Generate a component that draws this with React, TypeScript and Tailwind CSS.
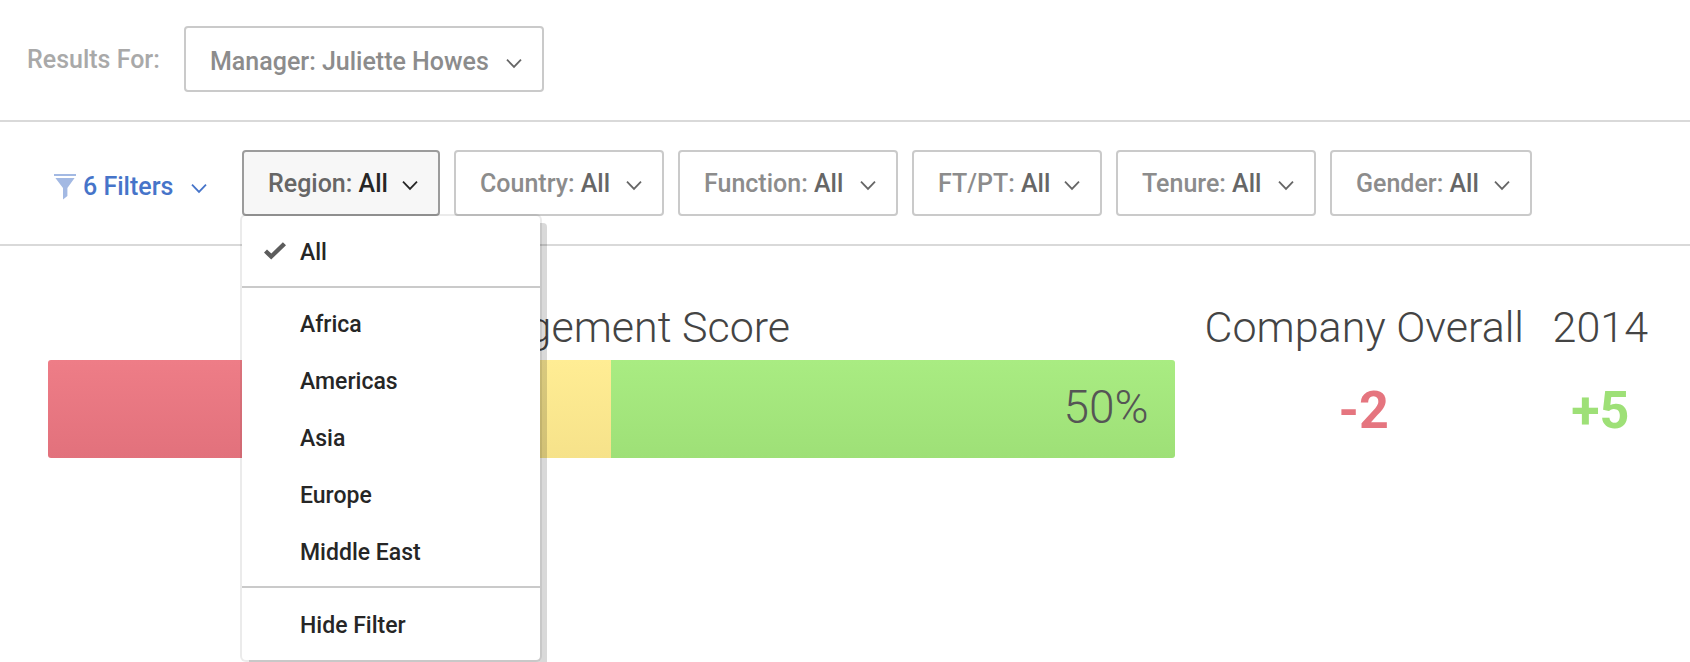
import React, { FC } from 'react'


interface Filter {
    name: string;
    width: string;
}

const filters: Filter[] = [
    { name: 'Region', width: 'w-[198px]' },
    { name: 'Country', width: 'w-[210px]' },
    { name: 'Function', width: 'w-[220px]' },
    { name: 'FT/PT', width: 'w-[190px]' },
    { name: 'Tenure', width: 'w-[200px]' },
    { name: 'Gender', width: 'w-[202px]' },
];

const regions = ['Africa', 'Americas', 'Asia', 'Europe', 'Middle East'];

const Chevron: FC = () => (
    <svg className="w-4 h-4 mt-1 shrink-0" viewBox="0 0 16 16" fill="none" stroke="currentColor" strokeWidth="1.8">
        <path d="M1 3.7 8 10.9l7-7.2" />
    </svg>
);

const Funnel: FC = () => (
    <svg className="w-[22px] h-[26px] shrink-0 text-[#a3b9e3]" viewBox="0 0 22 26" fill="currentColor">
        <path d="M0 0h22v2H0zM1.4 4h19.2L13.4 14v8L9 25.6V14z" />
    </svg>
);

const Check: FC = () => (
    <svg className="w-[22px] h-[18px] mb-1 shrink-0 text-[#5c5c5c]" viewBox="0 0 22 18" fill="currentColor">
        <path d="M0 10.6 3 7.6l4.3 4L18.9.2 22 3.2 7.2 17.6z" />
    </svg>
);

const ResultsBar: FC = () => (
    <div className="flex items-center border-b-2 border-[#d9d9d9] pl-[27px] pt-[26px] pb-7">
        <span className="w-[157px] pt-0.5 text-[#a9a9a9]">Results For:</span>
        <button className="flex items-center justify-between w-[360px] h-[66px] pt-1.5 pl-6 pr-5 border-2 border-[#cacaca] rounded-[4px] text-[#8c8c8c]">
            Manager: Juliette Howes
            <span className="text-[#666]"><Chevron /></span>
        </button>
    </div>
);

const RegionMenu: FC = () => (
    <div
        role="menu"
        className="absolute z-10 left-0 top-full w-[298px] rounded-[4px] bg-white text-[23px] text-[#262626] shadow-[0_0_0_2px_rgba(0,0,0,0.08),7px_7px_0_0_rgba(0,0,0,0.15)]"
    >
        <div className="pt-2 pb-[5px] border-b-2 border-[#cacaca]">
            <button role="menuitem" className="flex items-center gap-[14px] w-full h-[57px] pl-[22px]">
                <Check />
                All
            </button>
        </div>
        <div className="pt-2 pb-[5px] border-b-2 border-[#cacaca]">
            {regions.map((region) => (
                <button key={region} role="menuitem" className="block w-full h-[57px] pl-[58px] text-left">{region}</button>
            ))}
        </div>
        <div className="pt-[9px] pb-1.5">
            <button role="menuitem" className="block w-full h-[57px] pl-[58px] text-left">Hide Filter</button>
        </div>
    </div>
);

const FilterBar: FC = () => (
    <div className="flex items-center border-b-2 border-[#d9d9d9] pl-[54px] py-7">
        <button className="flex items-center w-[188px] pt-2 text-[#4674c9]">
            <Funnel />
            <span className="pl-[7px] pr-[18px]">6 Filters</span>
            <Chevron />
        </button>
        <div className="flex gap-[14px]">
            {filters.map(({ name, width }) => {
                const open = name === 'Region';
                return (
                    <div key={name} className={`relative ${width}`}>
                        <button
                            aria-expanded={open}
                            className={`flex items-center justify-between w-full h-[66px] pt-0.5 pl-6 pr-5 border-2 rounded-[4px] ${open ? 'border-[#9c9c9c] bg-[#f7f7f7] text-[#666]' : 'border-[#cacaca] text-[#8c8c8c]'}`}
                        >
                            <span>{name}: <span className={open ? 'text-[#262626]' : 'text-[#666]'}>All</span></span>
                            <span className={open ? 'text-[#262626]' : 'text-[#666]'}><Chevron /></span>
                        </button>
                        {open && <RegionMenu />}
                    </div>
                );
            })}
        </div>
    </div>
);

const Scores: FC = () => (
    <div className="flex gap-[30px] pl-12 pr-[42px] pt-[54px] text-[#444]">
        <div className="flex-1">
            <h2 className="h-[60px] leading-[54px] text-[43px] font-light text-center">Engagement Score</h2>
            <div className="flex h-[98px] rounded-[3px] overflow-hidden">
                <div className="w-[30%] bg-linear-to-b from-[#ee7d87] to-[#e2717c]" />
                <div className="w-[20%] bg-linear-to-b from-[#ffed94] to-[#f6e28a]" />
                <div className="w-[50%] bg-linear-to-b from-[#a9ec82] to-[#9ee077] pr-[26px] leading-[94px] text-[46px] font-light text-right text-[#555]">50%</div>
            </div>
        </div>
        <div className="w-[318px] text-center whitespace-nowrap">
            <h2 className="h-[60px] leading-[54px] text-[43px] font-light">Company Overall</h2>
            <p className="leading-[102px] text-[52px] font-bold text-[#e5757f]">-2</p>
        </div>
        <div className="text-center">
            <h2 className="h-[60px] leading-[54px] text-[43px] font-light">2014</h2>
            <p className="leading-[102px] text-[52px] font-bold text-[#9ee077]">+5</p>
        </div>
    </div>
);

const App: FC = () => {
    return (
        <main className="min-h-screen bg-white font-['Roboto',sans-serif] text-[25px] leading-8 font-medium">
            <ResultsBar />
            <FilterBar />
            <Scores />
        </main>
    );
};

export default App;
